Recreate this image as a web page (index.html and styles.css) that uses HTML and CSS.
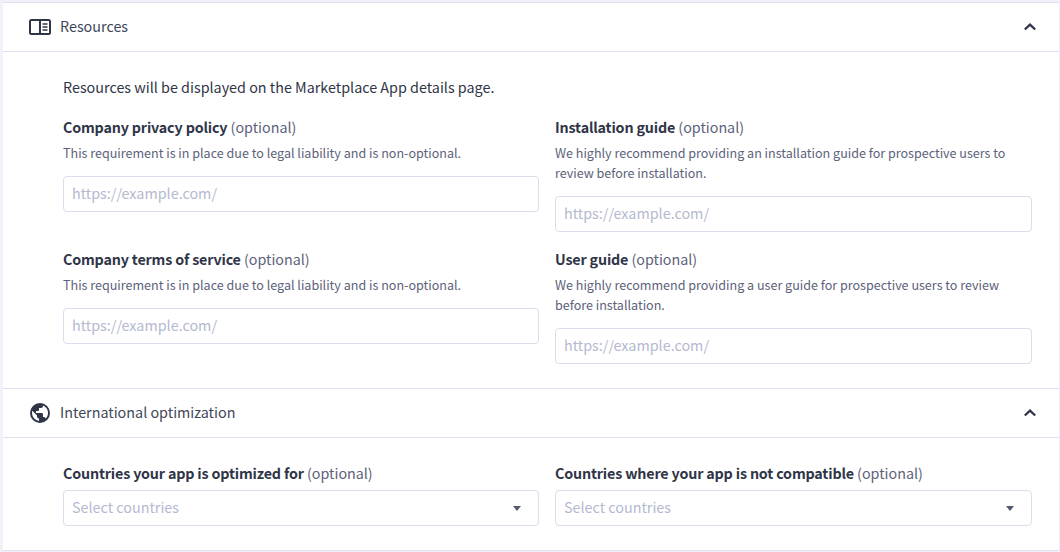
FILE: index.html
```html
<!DOCTYPE html>
<html lang="en">
<head>
<meta charset="utf-8">
<title>App listing</title>
<link rel="stylesheet" href="styles.css">
</head>
<body>
<div class="panel">
  <section class="section">
    <header class="head">
      <svg class="icon" width="24" height="24" viewBox="0 0 24 24"><path fill="#2f3547" fill-rule="evenodd" d="M4 4h16.500A2.500 2.500 0 0 1 23 6.500v11a2.500 2.500 0 0 1-2.500 2.500H3.500A2.500 2.500 0 0 1 1 17.500v-11A2.500 2.500 0 0 1 3.500 4zM3 6v12h8V6H3zm10 0v12h8V6h-8zm1.500 2.200h5v1.600h-5V8.200zm0 3h5v1.600h-5v-1.600zm0 3h5v1.600h-5v-1.600z"/></svg>
      <span class="title">Resources</span>
      <svg class="chev" width="14" height="10" viewBox="0 0 14 10"><path d="M1.800 7.500 7 2.600l5.200 4.900" fill="none" stroke="#2f3547" stroke-width="2.200"/></svg>
    </header>
    <div class="body">
      <p class="intro">Resources will be displayed on the Marketplace App details page.</p>
      <div class="grid">
        <div class="field">
          <div class="label"><b>Company privacy policy</b> (optional)</div>
          <div class="help">This requirement is in place due to legal liability and is non-optional.</div>
          <div class="input">https://example.com/</div>
        </div>
        <div class="field">
          <div class="label"><b>Installation guide</b> (optional)</div>
          <div class="help">We highly recommend providing an installation guide for prospective users to review before installation.</div>
          <div class="input">https://example.com/</div>
        </div>
        <div class="field">
          <div class="label"><b>Company terms of service</b> (optional)</div>
          <div class="help">This requirement is in place due to legal liability and is non-optional.</div>
          <div class="input">https://example.com/</div>
        </div>
        <div class="field">
          <div class="label"><b>User guide</b> (optional)</div>
          <div class="help">We highly recommend providing a user guide for prospective users to review before installation.</div>
          <div class="input">https://example.com/</div>
        </div>
      </div>
    </div>
  </section>
  <section class="section">
    <header class="head">
      <svg class="icon" width="24" height="24" viewBox="0 0 24 24"><path fill="#2f3547" fill-rule="evenodd" d="M12 2a10 10 0 1 0 0 20 10 10 0 0 0 0-20zM4 12c0-.8.100-1.500.3-2.200L9 14.500v1a2 2 0 0 0 2 2v2.400A8 8 0 0 1 4 12zm13.800 5.500a2 2 0 0 0-1.900-1.500h-1v-3a1 1 0 0 0-1-1H8v-2h2a1 1 0 0 0 1-1V7h2a2 2 0 0 0 2-2v-.4a8 8 0 0 1 2.800 12.900z"/></svg>
      <span class="title">International optimization</span>
      <svg class="chev" width="14" height="10" viewBox="0 0 14 10"><path d="M1.800 7.500 7 2.600l5.200 4.900" fill="none" stroke="#2f3547" stroke-width="2.200"/></svg>
    </header>
    <div class="body body-tight">
      <div class="grid">
        <div class="field">
          <div class="label"><b>Countries your app is optimized for</b> (optional)</div>
          <div class="input select">Select countries<span class="caret"></span></div>
        </div>
        <div class="field">
          <div class="label"><b>Countries where your app is not compatible</b> (optional)</div>
          <div class="input select">Select countries<span class="caret"></span></div>
        </div>
      </div>
    </div>
  </section>
</div>
</body>
</html>
```
FILE: styles.css
```css
* { box-sizing: border-box; }
html, body { margin: 0; height: 552px; overflow: hidden; }
body {
  background: #f1f2f9;
  font-family: "Noto Sans CJK SC", "Noto Sans", sans-serif;
  color: #2f3547;
}
.panel {
  margin: 2px 1px 0 3px;
  background: #fff;
  border-top: 1px solid #dfe1f0;
  border-bottom: 1px solid #dfe1f0;
  height: 549px;
}
.section + .section { border-top: 1px solid #dfe1f0; }
.head {
  display: flex;
  align-items: center;
  height: 49px;
  padding: 0 22px 0 25px;
  border-bottom: 1px solid #dfe1f0;
}
.icon { flex: none; }
.title {
  margin-left: 8px;
  padding-bottom: 2px;
  font-size: 14.35px;
  line-height: 20px;
  color: #404659;
  flex: 1;
}
.chev { flex: none; }
.body { padding: 26px 25px 24px 60px; }
.body-tight { padding-bottom: 0; }
.intro { margin: 0 0 20px; padding-bottom: 2px; font-size: 14.35px; line-height: 18px; }
.grid {
  display: grid;
  grid-template-columns: 476px 477px;
  column-gap: 16px;
  row-gap: 18px;
  align-items: start;
}
.label { font-size: 14.3px; line-height: 18px; padding-bottom: 2px; color: #5c627a; }
.label b { font-weight: 700; letter-spacing: -0.17px; color: #2f3547; }
.help { font-size: 12.55px; line-height: 20px; color: #5c627a; margin-top: 5px; }
.help + .input { margin-top: 13px; }
.input {
  height: 36px;
  border: 1px solid #dcdeec;
  border-radius: 4px;
  padding: 0 8px 2px;
  font-size: 14.35px;
  line-height: 32px;
  color: #b4b9cf;
  background: #fff;
}
.select {
  display: flex;
  justify-content: space-between;
  align-items: center;
  padding-right: 17px;
  margin-top: 6px;
}
.caret {
  width: 0;
  height: 0;
  margin-top: 2px;
  border-left: 4px solid transparent;
  border-right: 4px solid transparent;
  border-top: 5px solid #545a6d;
}
```
